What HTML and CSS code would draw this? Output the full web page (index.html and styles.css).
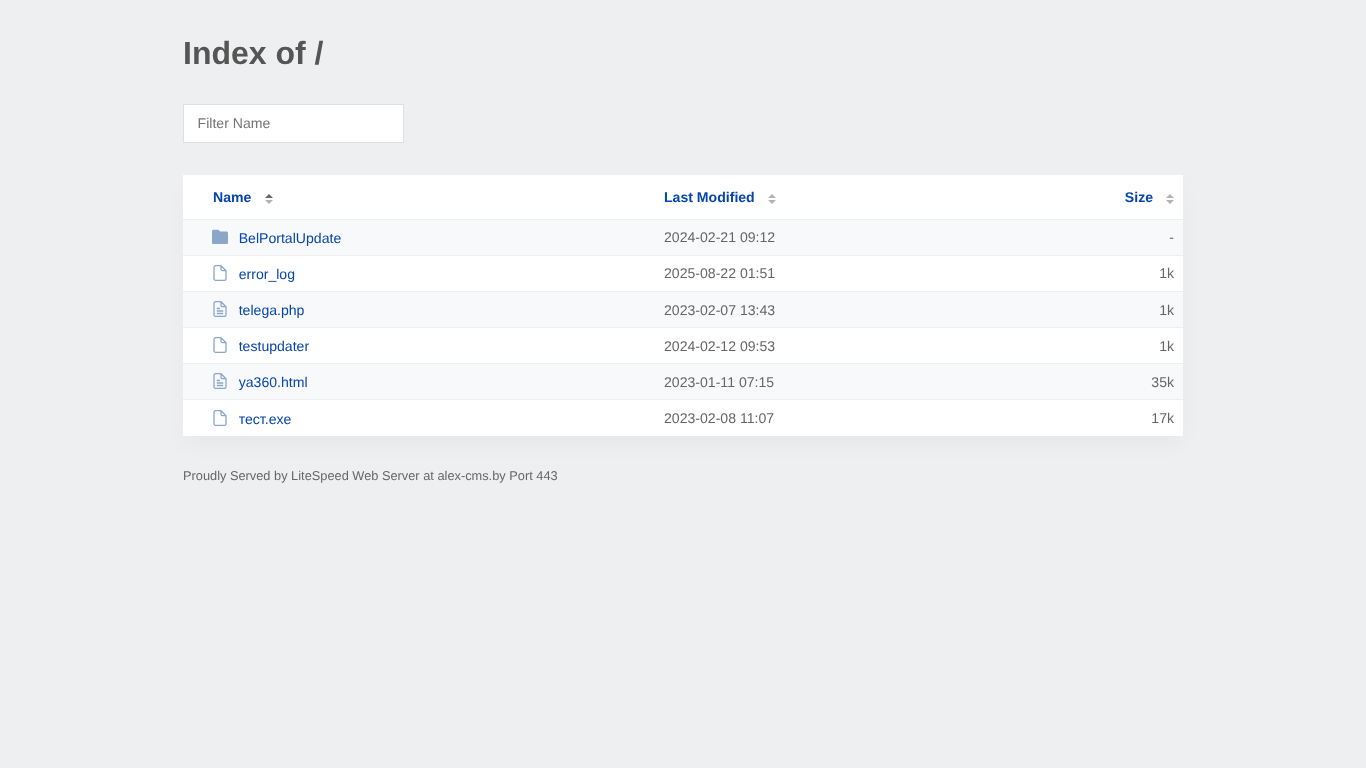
FILE: index.html
```html
<!DOCTYPE html>
<html lang="en">
<head>
<meta charset="utf-8">
<title>Index of /</title>
<link rel="stylesheet" href="styles.css">
</head>
<body>
<main class="container">
  <h1 class="title">Index of /</h1>
  <input class="filter" type="search" placeholder="Filter Name">
  <table class="listing">
    <thead>
      <tr>
        <th class="col-name"><a href="#">Name</a><svg class="sort" viewBox="0 0 8 10"><path class="up dark" d="M4 0 8 4H0z"/><path class="down" d="M4 10 0 6H8z"/></svg></th>
        <th class="col-date"><a href="#">Last Modified</a><svg class="sort" viewBox="0 0 8 10"><path class="up" d="M4 0 8 4H0z"/><path class="down" d="M4 10 0 6H8z"/></svg></th>
        <th class="col-size"><a href="#">Size</a><svg class="sort" viewBox="0 0 8 10"><path class="up" d="M4 0 8 4H0z"/><path class="down" d="M4 10 0 6H8z"/></svg></th>
      </tr>
    </thead>
    <tbody>
      <tr>
        <td class="col-name"><svg class="icon" viewBox="0 0 16 16"><path class="solid" d="M1.600.7h4.200c.5 0 .9.2 1.200.6L8.200 2.500h6.200C15.300 2.500 16 3.200 16 4.100v9.400c0 .9-.7 1.600-1.600 1.600H1.600C.7 15.100 0 14.400 0 13.500V2.300C0 1.400.7.700 1.600.7z"/></svg><a href="#">BelPortalUpdate</a></td>
        <td class="col-date">2024-02-21 09:12</td>
        <td class="col-size">-</td>
      </tr>
      <tr>
        <td class="col-name"><svg class="icon" viewBox="0 0 16 16"><path class="line" d="M3.500.7h5.500L14 5.700v8c0 .9-.7 1.600-1.500 1.600h-9C2.700 15.300 2 14.600 2 13.700V2.300C2 1.400 2.700.7 3.500.7zM9 .7V4.300C9 5.100 9.600 5.700 10.400 5.700H14"/></svg><a href="#">error_log</a></td>
        <td class="col-date">2025-08-22 01:51</td>
        <td class="col-size">1k</td>
      </tr>
      <tr>
        <td class="col-name"><svg class="icon" viewBox="0 0 16 16"><path class="line" d="M3.500.7h5.500L14 5.700v8c0 .9-.7 1.600-1.500 1.600h-9C2.700 15.300 2 14.600 2 13.700V2.300C2 1.400 2.700.7 3.500.7zM9 .7V4.300C9 5.100 9.600 5.700 10.400 5.700H14M4.800 7.500h3M4.800 10h6.400M4.800 12.500h6.400"/></svg><a href="#">telega.php</a></td>
        <td class="col-date">2023-02-07 13:43</td>
        <td class="col-size">1k</td>
      </tr>
      <tr>
        <td class="col-name"><svg class="icon" viewBox="0 0 16 16"><path class="line" d="M3.500.7h5.500L14 5.700v8c0 .9-.7 1.600-1.500 1.600h-9C2.700 15.300 2 14.600 2 13.700V2.300C2 1.400 2.700.7 3.500.7zM9 .7V4.300C9 5.100 9.600 5.700 10.400 5.700H14"/></svg><a href="#">testupdater</a></td>
        <td class="col-date">2024-02-12 09:53</td>
        <td class="col-size">1k</td>
      </tr>
      <tr>
        <td class="col-name"><svg class="icon" viewBox="0 0 16 16"><path class="line" d="M3.500.7h5.500L14 5.700v8c0 .9-.7 1.600-1.500 1.600h-9C2.700 15.300 2 14.600 2 13.700V2.300C2 1.400 2.700.7 3.500.7zM9 .7V4.300C9 5.100 9.600 5.700 10.400 5.700H14M4.800 7.500h3M4.800 10h6.400M4.800 12.500h6.400"/></svg><a href="#">ya360.html</a></td>
        <td class="col-date">2023-01-11 07:15</td>
        <td class="col-size">35k</td>
      </tr>
      <tr>
        <td class="col-name"><svg class="icon" viewBox="0 0 16 16"><path class="line" d="M3.500.7h5.500L14 5.700v8c0 .9-.7 1.600-1.500 1.600h-9C2.700 15.300 2 14.600 2 13.700V2.300C2 1.400 2.700.7 3.500.7zM9 .7V4.300C9 5.100 9.600 5.700 10.400 5.700H14"/></svg><a href="#">тест.exe</a></td>
        <td class="col-date">2023-02-08 11:07</td>
        <td class="col-size">17k</td>
      </tr>
    </tbody>
  </table>
  <p class="footer">Proudly Served by LiteSpeed Web Server at alex-cms.by Port 443</p>
</main>
</body>
</html>
```
FILE: styles.css
```css
* { box-sizing: border-box; }
html, body { margin: 0; height: 100%; }
body {
  background: #eeeff1;
  color: #666;
  font-family: "Liberation Sans", Arial, sans-serif;
  font-size: 14.08px;
  text-rendering: geometricPrecision;
}
.container { width: 1000px; margin: 0 auto; padding-top: 33px; will-change: transform; }
.title {
  margin: 0 0 30px;
  font-size: 32px;
  line-height: 41px;
  font-weight: 700;
  color: #555;
}
.filter {
  display: block;
  width: 221px;
  height: 39px;
  margin: 0 0 32px;
  padding: 0 14px 1px 13.6px;
  border: 1px solid #dedfe1;
  border-radius: 0;
  background: #fff;
  outline: 0;
  appearance: none;
  font: 14.08px "Liberation Sans", Arial, sans-serif;
  text-rendering: geometricPrecision;
  color: #555;
}
.filter::placeholder { color: #757575; opacity: 1; }
.listing {
  width: 1000px;
  table-layout: fixed;
  border-collapse: collapse;
  background: #fff;
  box-shadow: 0 10px 20px rgba(0, 0, 0, .03);
}
.listing a { color: #0645ad; text-decoration: none; }
.listing th {
  height: 44.2px;
  padding: 0 9px;
  border-bottom: 1px solid #eceef1;
  font-weight: 700;
  text-align: left;
  vertical-align: middle;
}
.listing th a { color: #0645ad; }
.listing td {
  height: 36.15px;
  padding: 0 9px;
  border-bottom: 1px solid #eceef1;
  vertical-align: middle;
}
.listing tbody tr:nth-child(odd) { background: #f8f9fb; }
.listing tbody tr:last-child td { border-bottom: 0; }
th.col-name { width: 471px; padding-left: 30px; }
th.col-name .sort { margin-left: 13.7px; }
.listing td.col-name { padding-left: 29px; padding-bottom: .7px; }
.listing .col-date { width: 330px; padding-left: 10px; }
.listing .col-size { text-align: right; }
.icon { width: 16px; height: 16px; margin-right: 10.7px; vertical-align: -2.5px; }
.solid { fill: #8ba6c9; }
.line { fill: none; stroke: #8ba6c9; stroke-width: 1.3; }
.sort { width: 8px; height: 10px; margin-left: 13px; vertical-align: -2px; }
.sort .up, .sort .down { fill: #b3b3b3; }
.sort .dark { fill: #666; }
.footer { margin: 31px 0 0; font-size: 12.8px; line-height: 18px; color: #666; }
```
